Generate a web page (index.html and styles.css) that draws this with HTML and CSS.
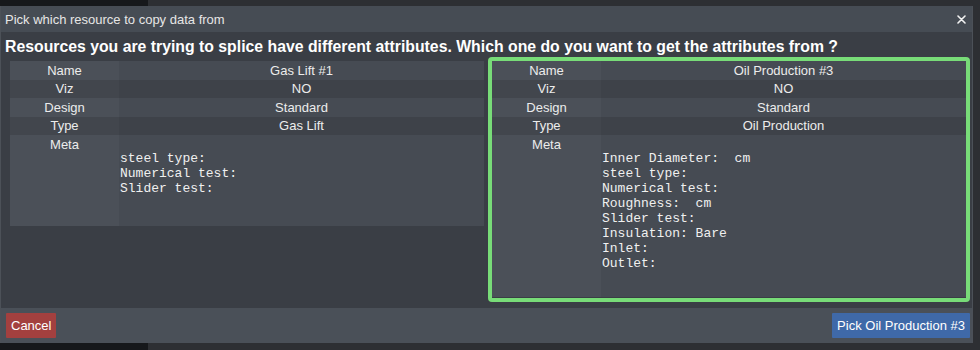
FILE: index.html
```html
<!DOCTYPE html>
<html lang="en">
<head>
    <meta charset="UTF-8">
    <meta name="viewport" content="width=device-width, initial-scale=1.0">
    <title>Pick resource</title>
    <link rel="stylesheet" href="styles.css">
</head>
<body>
    <div class="modal">
        <div class="modal-header">
            <span class="modal-title">Pick which resource to copy data from</span>
            <button class="close" aria-label="Close">
                <svg width="9" height="9" viewBox="0 0 9 9">
                    <path d="M1 1L8 8M8 1L1 8" stroke="#f2f2f2" stroke-width="1.6" stroke-linecap="round"/>
                </svg>
            </button>
        </div>
        <div class="modal-body">
            <h4 class="question">Resources you are trying to splice have different attributes. Which one do you want to get the attributes from ?</h4>
            <div class="choices">
                <div class="choice">
                    <table class="attrs">
                        <tr><td class="key">Name</td><td class="val">Gas Lift #1</td></tr>
                        <tr><td class="key">Viz</td><td class="val">NO</td></tr>
                        <tr><td class="key">Design</td><td class="val">Standard</td></tr>
                        <tr><td class="key">Type</td><td class="val">Gas Lift</td></tr>
                        <tr><td class="key">Meta</td><td class="val meta"><pre>steel type:
Numerical test:
Slider test:</pre></td></tr>
                    </table>
                </div>
                <div class="choice selected">
                    <table class="attrs">
                        <tr><td class="key">Name</td><td class="val">Oil Production #3</td></tr>
                        <tr><td class="key">Viz</td><td class="val">NO</td></tr>
                        <tr><td class="key">Design</td><td class="val">Standard</td></tr>
                        <tr><td class="key">Type</td><td class="val">Oil Production</td></tr>
                        <tr><td class="key">Meta</td><td class="val meta"><pre>Inner Diameter:  cm
steel type:
Numerical test:
Roughness:  cm
Slider test:
Insulation: Bare
Inlet:
Outlet:</pre></td></tr>
                    </table>
                </div>
            </div>
        </div>
        <div class="modal-footer">
            <button class="btn btn-cancel">Cancel</button>
            <button class="btn btn-pick">Pick Oil Production #3</button>
        </div>
    </div>
</body>
</html>
```

FILE: styles.css
```css
body {
    margin: 0;
    padding: 6px 0 0 0;
    height: 350px;
    box-sizing: border-box;
    overflow: hidden;
    font-family: 'Liberation Sans', Arial, sans-serif;
    font-size: 13px;
    color: #ececec;
    background: linear-gradient(to right, #16181b 0, #16181b 148px, #2d2f33 148px);
}
.modal {
    width: 973px;
    background-color: #3a3e45;
    border-left: 1px solid #4c5158;
    border-right: 1px solid #4c5158;
    box-sizing: border-box;
}
.modal-header {
    display: flex;
    justify-content: space-between;
    align-items: center;
    height: 26px;
    padding: 0 5px 0 4px;
    background-color: #464c54;
}
.modal-title {
    font-size: 13px;
    color: #e6e6e6;
}
.close {
    border: none;
    background: none;
    padding: 0;
    display: flex;
    margin-right: 1px;
}
.modal-body {
    padding: 5px 2px 6px 5px;
}
.question {
    margin: 0 0 0 -1px;
    font-size: 15.8px;
    line-height: 20px;
    font-weight: bold;
    color: #ffffff;
}
.choices {
    display: flex;
}
.choice {
    flex: 1;
    height: 245px;
    box-sizing: border-box;
    border: 4px solid transparent;
    border-radius: 4px;
}
.choice.selected {
    border-color: #78dc78;
}
.attrs {
    width: 100%;
    border-collapse: collapse;
    table-layout: fixed;
}
.attrs td {
    padding: 0;
    height: 19px;
    line-height: 19px;
    text-align: center;
    vertical-align: top;
    color: #ececec;
}
.attrs tr:nth-child(even) td {
    height: 18px;
    line-height: 18px;
}
.attrs .key {
    width: 109px;
}
.attrs tr:nth-child(odd) .key {
    background-color: #4b5058;
}
.attrs tr:nth-child(odd) .val {
    background-color: #464b53;
}
.attrs tr:nth-child(even) .key {
    background-color: #42464d;
}
.attrs tr:nth-child(even) .val {
    background-color: #3e4249;
}
.attrs .meta {
    text-align: left;
}
.attrs pre {
    margin: 16px 0 30px 1px;
    font-family: 'Liberation Mono', 'Courier New', monospace;
    font-size: 13px;
    line-height: 15px;
    color: #f0f0f0;
}
.selected .attrs pre {
    margin-bottom: 26px;
}
.modal-footer {
    display: flex;
    justify-content: space-between;
    align-items: center;
    height: 35px;
    padding: 0 2px 0 5px;
    background-color: #4a5058;
}
.btn {
    border: none;
    border-radius: 1px;
    height: 25px;
    padding: 0 5px;
    font-family: 'Liberation Sans', Arial, sans-serif;
    font-size: 13px;
    color: #ffffff;
}
.btn-cancel {
    background-color: #a3403f;
}
.btn-pick {
    background-color: #3f69a8;
}
```
